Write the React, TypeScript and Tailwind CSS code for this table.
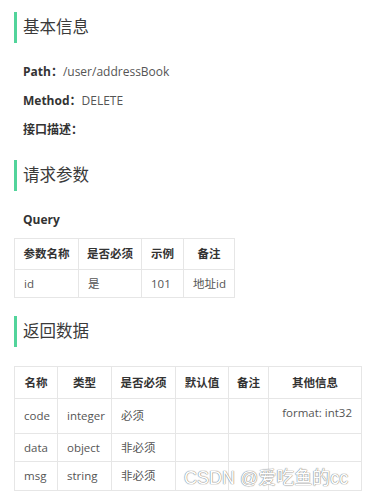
const font = { fontFamily: '"Open Sans", "Noto Sans CJK SC", sans-serif' }

interface Column {
  title: string
  width: string
}

function SectionTitle({ title }: { title: string }) {
  return (
    <h2 className="flex h-[31px] items-center border-l-[3px] border-[#52d49b] pl-[6px] text-[16.5px] leading-none text-[#3a3a3a]">
      {title}
    </h2>
  )
}

function InfoLine({ label, value }: { label: string; value?: string }) {
  return (
    <div className="flex h-[29px] items-center text-[12px] whitespace-nowrap">
      <span className="font-bold text-[#333]">{label}</span>
      {value && <span className="text-[#555]">{value}</span>}
    </div>
  )
}

function ParamTable({
  columns,
  rows,
  heights,
  width,
}: {
  columns: Column[]
  rows: string[][]
  heights: string[]
  width: string
}) {
  return (
    <table className={`${width} max-w-none table-fixed border-collapse text-[11.5px] whitespace-nowrap`}>
      <colgroup>
        {columns.map((c) => (
          <col key={c.title} className={c.width} />
        ))}
      </colgroup>
      <thead>
        <tr className={heights[0]}>
          {columns.map((c) => (
            <th
              key={c.title}
              className="border border-[#e6e6e6] p-0 text-center font-bold text-[#333]"
            >
              {c.title}
            </th>
          ))}
        </tr>
      </thead>
      <tbody>
        {rows.map((row, i) => (
          <tr key={i} className={heights[i + 1]}>
            {row.map((cell, j) => (
              <td
                key={j}
                className={`border border-[#e6e6e6] text-[#555] ${
                  cell.startsWith('format') ? 'pr-[9px] pb-[7px] text-right' : 'pl-[9px] text-left'
                }`}
              >
                {cell}
              </td>
            ))}
          </tr>
        ))}
      </tbody>
    </table>
  )
}

export default function App() {
  return (
    <div className="min-h-[497px] w-[368px] overflow-hidden bg-white px-[14px] pt-[12px]" style={font}>
      <SectionTitle title="基本信息" />
      <div className="mt-[14px] pl-[9px]">
        <InfoLine label="Path：" value="/user/addressBook" />
        <InfoLine label="Method：" value="DELETE" />
        <InfoLine label="接口描述：" />
      </div>

      <div className="mt-[16px]">
        <SectionTitle title="请求参数" />
      </div>
      <div className="mt-[14px] pl-[9px]">
        <InfoLine label="Query" />
      </div>
      <div className="mt-[4px]">
        <ParamTable
          width="w-[220px]"
          columns={[
            { title: '参数名称', width: 'w-[64px]' },
            { title: '是否必须', width: 'w-[63px]' },
            { title: '示例', width: 'w-[42px]' },
            { title: '备注', width: 'w-[51px]' },
          ]}
          rows={[['id', '是', '101', '地址id']]}
          heights={['h-[31px]', 'h-[28px]']}
        />
      </div>

      <div className="mt-[18px]">
        <SectionTitle title="返回数据" />
      </div>
      <div className="relative mt-[19px] w-[347px]">
        <ParamTable
          width="w-[347px]"
          columns={[
            { title: '名称', width: 'w-[43px]' },
            { title: '类型', width: 'w-[54px]' },
            { title: '是否必须', width: 'w-[64px]' },
            { title: '默认值', width: 'w-[53px]' },
            { title: '备注', width: 'w-[40px]' },
            { title: '其他信息', width: 'w-[93px]' },
          ]}
          rows={[
            ['code', 'integer', '必须', '', '', 'format: int32'],
            ['data', 'object', '非必须', '', '', ''],
            ['msg', 'string', '非必须', '', '', ''],
          ]}
          heights={['h-[32px]', 'h-[35px]', 'h-[28px]', 'h-[29px]']}
        />
        {/* site watermark */}
        <span
          className="absolute bottom-[4px] left-[170px] text-[18px] leading-none whitespace-nowrap text-white [text-shadow:0_0_1px_#777,0_0_1px_#777]"
          style={{ fontFamily: '"Liberation Sans", "Noto Sans CJK SC", sans-serif' }}
        >
          CSDN @爱吃鱼的cc
        </span>
      </div>
    </div>
  )
}
